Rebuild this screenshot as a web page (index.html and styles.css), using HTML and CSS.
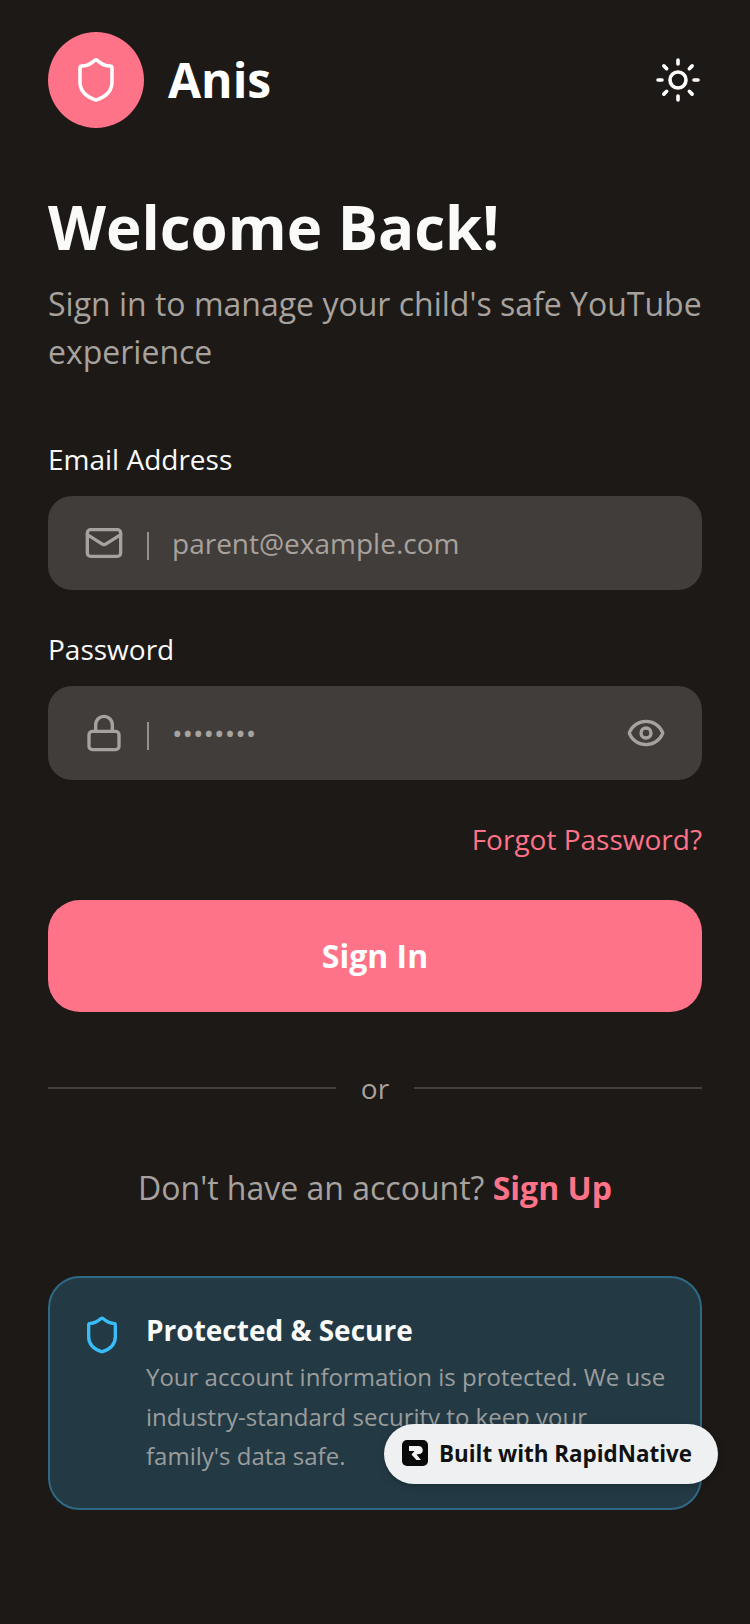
FILE: index.html
```html
<!DOCTYPE html>
<html>
  <head>
    <meta charset="UTF-8">
    <title>Anis - Sign in</title>
    <link rel="stylesheet" href="styles.css">
  </head>
  <body>
    <div class="screen">
      <header class="top">
        <div class="brand">
          <div class="brand-icon">
            <svg class="shield" viewBox="0 0 24 24" width="48" height="48"><path d="M20 13c0 5-3.5 7.5-7.66 8.95a1 1 0 0 1-.67-.01C7.5 20.5 4 18 4 13V6a1 1 0 0 1 1-1c2 0 4.5-1.2 6.24-2.72a1.17 1.17 0 0 1 1.52 0C14.51 3.81 17 5 19 5a1 1 0 0 1 1 1z"/></svg>
          </div>
          <span class="brand-name">Anis</span>
        </div>
        <svg class="sun" viewBox="0 0 24 24" width="48" height="48"><circle cx="12" cy="12" r="4"/><path d="M12 2v2M12 20v2M4.93 4.93l1.41 1.41M17.66 17.66l1.41 1.41M2 12h2M20 12h2M6.34 17.66l-1.41 1.41M19.07 4.93l-1.41 1.41"/></svg>
      </header>

      <h1 class="title">Welcome Back!</h1>
      <p class="subtitle">Sign in to manage your child's safe YouTube experience</p>

      <form class="form">
        <label class="label">Email Address</label>
        <div class="field">
          <svg class="field-icon" viewBox="0 0 24 24" width="40" height="40"><rect x="2" y="4" width="20" height="16" rx="2"/><path d="m22 7-8.97 5.7a1.94 1.94 0 0 1-2.06 0L2 7"/></svg>
          <span class="sep"></span>
          <span class="placeholder">parent@example.com</span>
        </div>

        <label class="label label-pass">Password</label>
        <div class="field">
          <svg class="field-icon" viewBox="0 0 24 24" width="40" height="40"><rect x="3" y="11" width="18" height="11" rx="2"/><path d="M7 11V7a5 5 0 0 1 10 0v4"/></svg>
          <span class="sep"></span>
          <span class="dots">••••••••</span>
          <svg class="field-icon" viewBox="0 0 24 24" width="40" height="40"><path d="M2.06 12.35a1 1 0 0 1 0-.7 10.75 10.75 0 0 1 19.88 0 1 1 0 0 1 0 .7 10.75 10.75 0 0 1-19.88 0"/><circle cx="12" cy="12" r="3"/></svg>
        </div>

        <a class="forgot">Forgot Password?</a>
        <button class="submit" type="button">Sign In</button>
      </form>

      <div class="divider">
        <span class="line"></span>
        <span class="or">or</span>
        <span class="line"></span>
      </div>

      <p class="signup">Don't have an account? <a class="signup-link">Sign Up</a></p>

      <section class="notice">
        <svg class="notice-icon" viewBox="0 0 24 24" width="40" height="40"><path d="M20 13c0 5-3.5 7.5-7.66 8.95a1 1 0 0 1-.67-.01C7.5 20.5 4 18 4 13V6a1 1 0 0 1 1-1c2 0 4.5-1.2 6.24-2.72a1.17 1.17 0 0 1 1.52 0C14.51 3.81 17 5 19 5a1 1 0 0 1 1 1z"/></svg>
        <div class="notice-body">
          <h3 class="notice-title">Protected &amp; Secure</h3>
          <p class="notice-text">Your account information is protected. We use industry-standard security to keep your family's data safe.</p>
        </div>
      </section>

      <div class="badge">
        <svg class="badge-logo" viewBox="0 0 26 26" width="26" height="26"><rect width="26" height="26" rx="5" fill="#0a0a0a"/><path d="M7 6h9.500a4.200 4.200 0 0 1 2.200 7.800L14.500 14.500 19 20h-4.600L9.500 14.600 12.500 11H7z" fill="#f2f2f2"/></svg>
        <span>Built with RapidNative</span>
      </div>
    </div>
  </body>
</html>
```

FILE: styles.css
```css
html, body {
  margin: 0;
  background: #1c1917;
}
.screen {
  position: relative;
  width: 750px;
  height: 1624px;
  box-sizing: border-box;
  padding: 32px 48px 0;
  font-family: "Open Sans", sans-serif;
  color: #fafaf9;
  overflow: hidden;
}
svg {
  fill: none;
  stroke-linecap: round;
  stroke-linejoin: round;
  flex: none;
}

/* header */
.top {
  display: flex;
  align-items: center;
  justify-content: space-between;
}
.brand {
  display: flex;
  align-items: center;
  gap: 24px;
}
.brand-icon {
  width: 96px;
  height: 96px;
  border-radius: 50%;
  background: #ff7389;
  display: flex;
  align-items: center;
  justify-content: center;
}
.shield {
  stroke: #fff;
  stroke-width: 1.8;
}
.brand-name {
  font-size: 48px;
  line-height: 64px;
  font-weight: 700;
  color: #fff;
}
.sun {
  stroke: #fff;
  stroke-width: 1.8;
}

/* intro */
.title {
  margin: 63px 0 0;
  font-size: 60px;
  line-height: 72px;
  font-weight: 700;
}
.subtitle {
  margin: 17px 0 0;
  font-size: 32px;
  line-height: 48px;
  color: #a8a29e;
}

/* form */
.form {
  display: flex;
  flex-direction: column;
  margin-top: 64px;
}
.label {
  font-size: 28px;
  line-height: 38px;
  color: #fafaf9;
  margin-bottom: 18px;
}
.label-pass {
  margin-top: 40px;
}
.field {
  display: flex;
  align-items: center;
  height: 94px;
  padding: 0 36px;
  border-radius: 24px;
  background: #413d3a;
}
.field-icon {
  stroke: #a8a29e;
  stroke-width: 2;
}
.sep {
  width: 2px;
  height: 28px;
  margin: 6px 23px 0;
  background: #968f8b;
}
.placeholder {
  font-size: 28px;
  color: #a8a29e;
}
.dots {
  font-size: 28px;
  color: #a8a29e;
  flex: 1;
}
.forgot {
  align-self: flex-end;
  margin-top: 40px;
  font-size: 28px;
  line-height: 38px;
  color: #ff7389;
}
.submit {
  margin-top: 42px;
  height: 112px;
  padding: 0 0 2px;
  border: none;
  border-radius: 32px;
  background: #ff7389;
  color: #fff;
  font-family: inherit;
  font-size: 32px;
  font-weight: 700;
}

/* or */
.divider {
  display: flex;
  align-items: center;
  gap: 25px;
  margin-top: 56px;
}
.line {
  flex: 1;
  height: 2px;
  background: #44403c;
}
.or {
  font-size: 28px;
  line-height: 40px;
  color: #a8a29e;
}
.signup {
  margin: 56px 0 0;
  text-align: center;
  font-size: 32px;
  line-height: 48px;
  color: #a8a29e;
}
.signup-link {
  font-weight: 700;
  color: #ff7389;
}

/* protected card */
.notice {
  display: flex;
  gap: 24px;
  margin-top: 64px;
  padding: 32px;
  border: 2px solid #2f6a85;
  border-radius: 32px;
  background: #233a45;
}
.notice-icon {
  stroke: #38bdf8;
  stroke-width: 2;
  margin-top: 5px;
}
.notice-body {
  flex: 1;
}
.notice-title {
  margin: 0;
  font-size: 28px;
  line-height: 40px;
  font-weight: 700;
  color: #fafaf9;
}
.notice-text {
  margin: 7px 0 0;
  font-size: 24px;
  line-height: 39.6px;
  color: #9b9d9d;
}

/* floating badge */
.badge {
  position: absolute;
  left: 384px;
  top: 1424px;
  width: 334px;
  height: 60px;
  box-sizing: border-box;
  display: flex;
  align-items: center;
  gap: 11px;
  padding-left: 18px;
  padding-bottom: 2px;
  border-radius: 30px;
  background: #eef0f2;
  box-shadow: 0 2px 8px rgba(0, 0, 0, 0.25);
  color: #111;
  font-size: 22.4px;
  font-weight: 700;
}
```
